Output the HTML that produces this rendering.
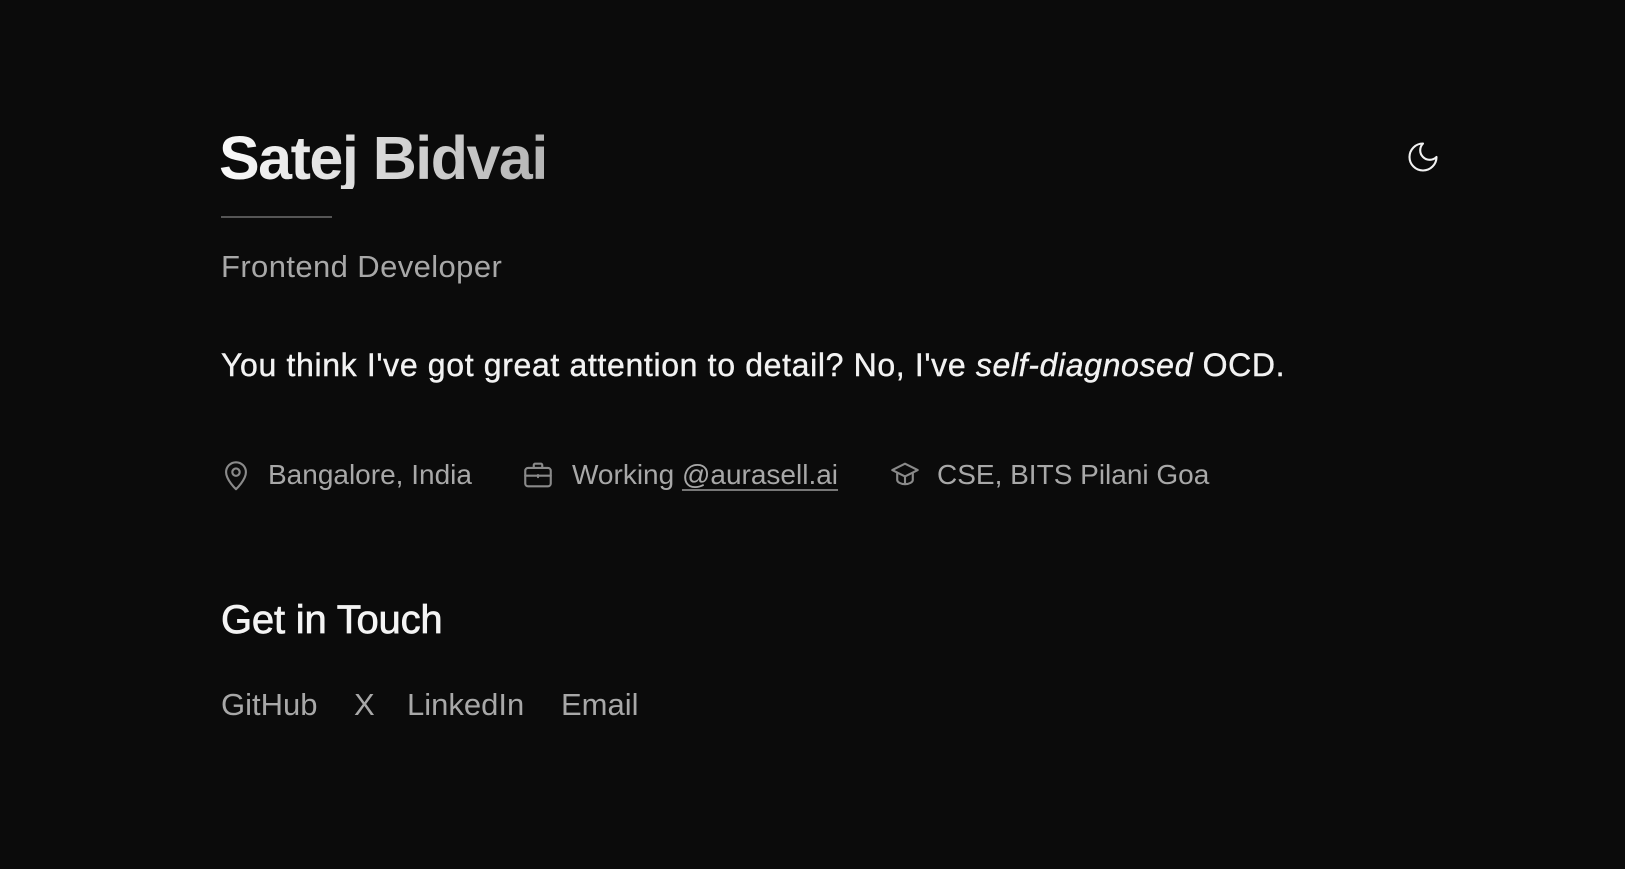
<!DOCTYPE html>
<html><head><meta charset="utf-8"><style>
html,body{margin:0;padding:0;background:#0b0b0b;width:1625px;height:869px;overflow:hidden;font-family:"Liberation Sans",sans-serif}
.a{position:absolute;white-space:nowrap;line-height:1}
h1{position:absolute;left:219px;top:128px;margin:0;font-size:61px;font-weight:700;letter-spacing:-1.5px;line-height:1;background:linear-gradient(90deg,#fafafa,#b5b5b5);-webkit-background-clip:text;background-clip:text;color:transparent}
.rule{position:absolute;left:221px;top:216px;width:111px;height:2px;background:#555}
.sub{left:221px;top:251px;font-size:31px;color:#a8a8a8;letter-spacing:.4px}
.quote{left:221px;top:349px;font-size:32px;color:#f2f2f2;letter-spacing:.65px;-webkit-text-stroke:.4px #f2f2f2}
.meta{top:461px;font-size:28px;color:#a8a8a8}
.meta u{text-decoration-color:#777;text-underline-offset:5px}
h2{position:absolute;left:221px;top:600px;margin:0;font-size:40px;font-weight:400;-webkit-text-stroke:.7px #f4f4f4;color:#f4f4f4;line-height:1;letter-spacing:-.2px}
.lk{top:689px;font-size:31px;color:#a8a8a8}
svg{position:absolute}
</style></head><body>
<h1>Satej Bidvai</h1>
<div class="rule"></div>
<div class="a sub">Frontend Developer</div>
<div class="a quote">You think I've got great attention to detail? No, I've <i>self-diagnosed</i> OCD.</div>

<svg style="left:219px;top:458px" width="34" height="34" viewBox="0 0 24 24" fill="none" stroke="#8a8a8a" stroke-width="1.5" stroke-linecap="round" stroke-linejoin="round"><path d="M12 22s-7-6.5-7-12a7 7 0 0 1 14 0c0 5.5-7 12-7 12z"/><circle cx="12" cy="10" r="2.6"/></svg>
<div class="a meta" style="left:268px">Bangalore, India</div>

<svg style="left:521px;top:458px" width="34" height="34" viewBox="0 0 24 24" fill="none" stroke="#8a8a8a" stroke-width="1.5" stroke-linecap="round" stroke-linejoin="round"><rect x="3" y="7" width="18" height="13" rx="2"/><path d="M9 7V5a1 1 0 0 1 1-1h4a1 1 0 0 1 1 1v2M3 12.5h18M12 12v1.5"/></svg>
<div class="a meta" style="left:572px">Working <u>@aurasell.ai</u></div>

<svg style="left:888px;top:458px" width="34" height="34" viewBox="0 0 24 24" fill="none" stroke="#8a8a8a" stroke-width="1.5" stroke-linecap="round" stroke-linejoin="round"><path d="M12 4l9 4.5-9 4.5-9-4.5z"/><path d="M6.5 10.5v5c0 1.5 2.5 3 5.5 3s5.5-1.5 5.5-3v-5M12 13v5"/></svg>
<div class="a meta" style="left:937px">CSE, BITS Pilani Goa</div>

<h2>Get in Touch</h2>
<div class="a lk" style="left:221px">GitHub</div>
<div class="a lk" style="left:354px">X</div>
<div class="a lk" style="left:407px">LinkedIn</div>
<div class="a lk" style="left:561px">Email</div>

<svg style="left:1405px;top:139px" width="36" height="36" viewBox="0 0 24 24" fill="none" stroke="#f2f2f2" stroke-width="1.4" stroke-linecap="round" stroke-linejoin="round"><path d="M12 3a6 6 0 0 0 9 9 9 9 0 1 1-9-9z"/></svg>
</body></html>
